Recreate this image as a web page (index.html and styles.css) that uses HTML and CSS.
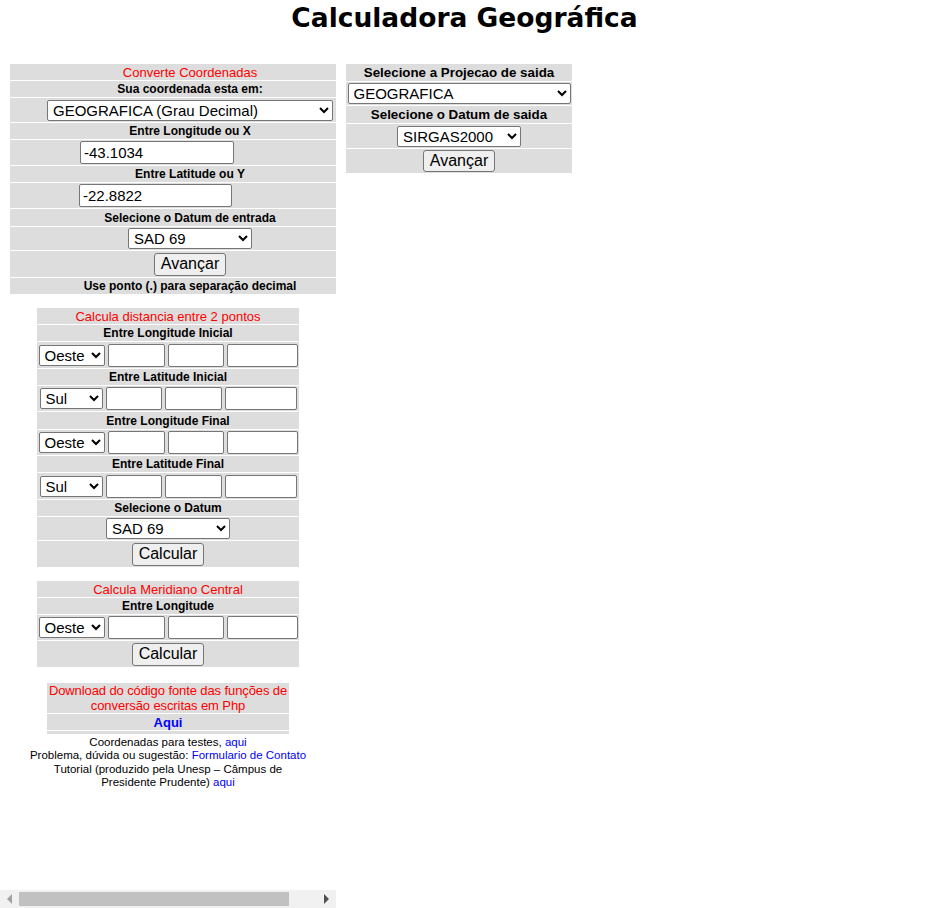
FILE: index.html
```html
<!DOCTYPE html>
<html lang="pt-BR">
<head>
<meta charset="utf-8">
<title>Calculadora Geográfica</title>
<link rel="stylesheet" href="styles.css">
</head>
<body>
<h1 class="title">Calculadora Geográfica</h1>
<div class="main">
  <div class="left-frame">
    <div class="frame-body">
      <div class="panel conv">
        <div class="row ttl">Converte Coordenadas</div>
        <div class="row lbl">Sua coordenada esta em:</div>
        <div class="row ctl h24">
          <select class="sel w286"><option>GEOGRAFICA (Grau Decimal)</option></select>
        </div>
        <div class="row lbl">Entre Longitude ou X</div>
        <div class="row ctl h25">
          <input class="txt w154 mr66" type="text" value="-43.1034">
        </div>
        <div class="row lbl">Entre Latitude ou Y</div>
        <div class="row ctl h25">
          <input class="txt w153 mr69" type="text" value="-22.8822">
        </div>
        <div class="row lbl h17">Selecione o Datum de entrada</div>
        <div class="row ctl h23">
          <select class="sel w124"><option>SAD 69</option></select>
        </div>
        <div class="row ctl h26">
          <button class="btn" type="button">Avançar</button>
        </div>
        <div class="row lbl">Use ponto (.) para separação decimal</div>
      </div>

      <div class="panel dist">
        <div class="row ttl">Calcula distancia entre 2 pontos</div>
        <div class="row lbl">Entre Longitude Inicial</div>
        <div class="row ctl h26 g3">
          <select class="sel w66"><option>Oeste</option></select>
          <input class="txt w57" type="text">
          <input class="txt w56" type="text">
          <input class="txt w71" type="text">
        </div>
        <div class="row lbl">Entre Latitude Inicial</div>
        <div class="row ctl h25 g3">
          <select class="sel w63"><option>Sul</option></select>
          <input class="txt w56" type="text">
          <input class="txt w57" type="text">
          <input class="txt w72" type="text">
        </div>
        <div class="row lbl h17">Entre Longitude Final</div>
        <div class="row ctl h25 g3">
          <select class="sel w66"><option>Oeste</option></select>
          <input class="txt w57" type="text">
          <input class="txt w56" type="text">
          <input class="txt w71" type="text">
        </div>
        <div class="row lbl">Entre Latitude Final</div>
        <div class="row ctl h26 g3">
          <select class="sel w63"><option>Sul</option></select>
          <input class="txt w56" type="text">
          <input class="txt w57" type="text">
          <input class="txt w72" type="text">
        </div>
        <div class="row lbl">Selecione o Datum</div>
        <div class="row ctl h23">
          <select class="sel w124"><option>SAD 69</option></select>
        </div>
        <div class="row ctl h26">
          <button class="btn" type="button">Calcular</button>
        </div>
      </div>

      <div class="panel merid">
        <div class="row ttl">Calcula Meridiano Central</div>
        <div class="row lbl">Entre Longitude</div>
        <div class="row ctl h25 g3">
          <select class="sel w66"><option>Oeste</option></select>
          <input class="txt w57" type="text">
          <input class="txt w56" type="text">
          <input class="txt w71" type="text">
        </div>
        <div class="row ctl h26">
          <button class="btn" type="button">Calcular</button>
        </div>
      </div>

      <div class="panel download">
        <div class="row ttl2">Download do código fonte das funções de<br>conversão escritas em Php</div>
        <div class="row aqui"><a href="#" class="link-b">Aqui</a></div>
        <div class="row empty"></div>
      </div>

      <p class="notes">
        Coordenadas para testes, <a href="#" class="link">aqui</a><br>
        Problema, dúvida ou sugestão: <a href="#" class="link">Formulario de Contato</a><br>
        Tutorial (produzido pela Unesp – Câmpus de<br>
        Presidente Prudente) <a href="#" class="link">aqui</a>
      </p>
    </div>
    <div class="hscroll">
      <span class="arrow-left"></span>
      <span class="thumb"></span>
      <span class="arrow-right"></span>
    </div>
  </div>

  <div class="right-frame">
    <div class="panel out">
      <div class="row lbl2">Selecione a Projecao de saida</div>
      <div class="row ctl h23">
        <select class="sel w223"><option>GEOGRAFICA</option></select>
      </div>
      <div class="row lbl2">Selecione o Datum de saida</div>
      <div class="row ctl h24">
        <select class="sel w124"><option>SIRGAS2000</option></select>
      </div>
      <div class="row ctl h24">
        <button class="btn h22" type="button">Avançar</button>
      </div>
    </div>
  </div>
</div>
</body>
</html>
```

FILE: styles.css
```css
* { box-sizing: border-box; }

body {
  margin: 0;
  background: #fff;
  color: #000;
  font-family: "Liberation Sans", Arial, sans-serif;
}

.title {
  margin: 0;
  padding-top: 2px;
  font: bold 26.5px/31px "DejaVu Sans", Verdana, sans-serif;
  text-align: center;
  color: #000;
}

.main {
  display: flex;
  margin-top: 23px;
  height: 852px;
}

.left-frame {
  width: 336px;
  flex-shrink: 0;
  display: flex;
  flex-direction: column;
}

.frame-body {
  flex: 1;
  overflow: hidden;
  padding: 8px;
}

.right-frame {
  padding: 8px 0 0 10px;
}

.panel {
  display: flex;
  flex-direction: column;
  gap: 1px;
}

.conv { width: 360px; margin-left: 2px; }
.dist { width: 262px; margin: 14px auto 0; }
.merid { width: 262px; margin: 14px auto 0; }
.download { width: 242px; margin: 16px auto 0; }
.out { width: 226px; }

.row {
  background: #dddddd;
  display: flex;
  align-items: center;
  justify-content: center;
  text-align: center;
}

.lbl {
  height: 16px;
  font-weight: bold;
  font-size: 12px;
}

.lbl2 {
  height: 17px;
  font-weight: bold;
  font-size: 13.33px;
}

.ttl {
  height: 16px;
  color: #ff0000;
  font-size: 13px;
}

.ttl2 {
  color: #ff0000;
  font-size: 13px;
  line-height: 15px;
  height: 30px;
  white-space: nowrap;
  letter-spacing: -0.1px;
}

.aqui {
  height: 16px;
  font-size: 13px;
  font-weight: bold;
}

.empty { height: 3px; }

.h17 { height: 17px; }
.h22 { height: 22px; }
.h23 { height: 23px; }
.h24 { height: 24px; }
.h25 { height: 25px; }
.h26 { height: 26px; }
.g3 { gap: 3px; }

.sel {
  font: 15px "Liberation Sans", Arial, sans-serif;
  height: 21px;
  color: #000;
  background: #fff;
  border: 1px solid #767676;
  border-radius: 2px;
  padding: 0 0 0 1px;
  margin: 0;
}

.txt {
  font: 15px "Liberation Sans", Arial, sans-serif;
  height: 23px;
  color: #000;
  background: #fff;
  border: 1px solid #767676;
  border-radius: 2px;
  padding: 1px 3px;
  margin: 0;
}

.btn {
  font: 16px "Liberation Sans", Arial, sans-serif;
  width: 72px;
  height: 23px;
  padding: 0;
  margin: 0;
  color: #000;
  background: #efefef;
  border: 1px solid #767676;
  border-radius: 3px;
}

.btn.h22 { height: 22px; }

.w286 { width: 286px; }
.w223 { width: 223px; }
.w154 { width: 154px; }
.w153 { width: 153px; }
.w124 { width: 124px; }
.w72 { width: 72px; }
.w71 { width: 71px; }
.w66 { width: 66px; }
.w63 { width: 63px; }
.w57 { width: 57px; }
.w56 { width: 56px; }
.mr66 { margin-right: 66px; }
.mr69 { margin-right: 69px; }

.link, .link-b {
  color: #0000ff;
  text-decoration: none;
}

.notes {
  margin: 2px 0 0;
  text-align: center;
  font-size: 11.5px;
  line-height: 13.4px;
}

.hscroll {
  height: 18px;
  background: #f1f1f1;
  display: flex;
  align-items: center;
  flex-shrink: 0;
}

.arrow-left {
  width: 0;
  height: 0;
  margin-left: 7px;
  border-top: 5px solid transparent;
  border-bottom: 5px solid transparent;
  border-right: 5px solid #a3a3a3;
}

.thumb {
  width: 270px;
  height: 14px;
  margin-left: 7px;
  background: #c1c1c1;
}

.arrow-right {
  width: 0;
  height: 0;
  margin-left: 35px;
  border-top: 5px solid transparent;
  border-bottom: 5px solid transparent;
  border-left: 5px solid #505050;
}
```
